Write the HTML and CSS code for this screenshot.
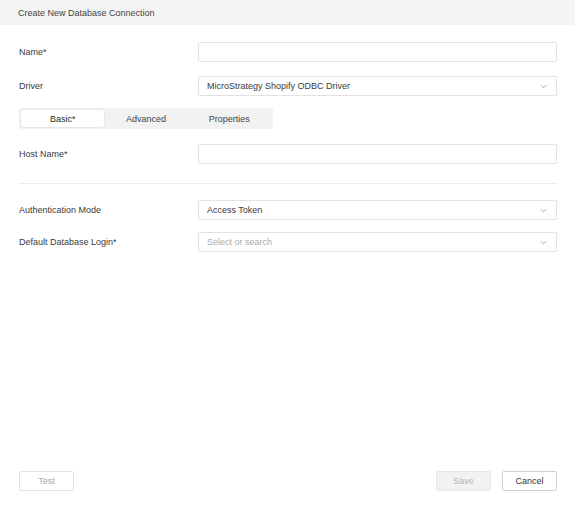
FILE: index.html
```html
<!DOCTYPE html>
<html>
<head>
<meta charset="utf-8">
<link rel="stylesheet" href="styles.css">
</head>
<body>
<div class="dialog">
  <div class="header">Create New Database Connection</div>
  <div class="body">
    <div class="row row-name">
      <div class="label">Name*</div>
      <div class="field"></div>
    </div>
    <div class="row row-driver">
      <div class="label">Driver</div>
      <div class="field select"><span class="value">MicroStrategy Shopify ODBC Driver</span><svg class="chev" viewBox="0 0 8 5" width="7" height="5"><path d="M1 1 L4 4 L7 1" fill="none" stroke="#999" stroke-width="1"/></svg></div>
    </div>
    <div class="tabs">
      <div class="tab active">Basic*</div>
      <div class="tab">Advanced</div>
      <div class="tab">Properties</div>
    </div>
    <div class="row row-host">
      <div class="label">Host Name*</div>
      <div class="field"></div>
    </div>
    <div class="divider"></div>
    <div class="row row-auth">
      <div class="label">Authentication Mode</div>
      <div class="field select"><span class="value">Access Token</span><svg class="chev" viewBox="0 0 8 5" width="7" height="5"><path d="M1 1 L4 4 L7 1" fill="none" stroke="#999" stroke-width="1"/></svg></div>
    </div>
    <div class="row row-login">
      <div class="label">Default Database Login*</div>
      <div class="field select"><span class="value placeholder">Select or search</span><svg class="chev" viewBox="0 0 8 5" width="7" height="5"><path d="M1 1 L4 4 L7 1" fill="none" stroke="#999" stroke-width="1"/></svg></div>
    </div>
  </div>
  <div class="footer">
    <button class="btn btn-test">Test</button>
    <div class="right">
      <button class="btn btn-save">Save</button>
      <button class="btn btn-cancel">Cancel</button>
    </div>
  </div>
</div>
</body>
</html>
```
FILE: styles.css
```css
* { box-sizing: border-box; }
html, body { margin: 0; padding: 0; background: #fff; }
body {
  font-family: "Liberation Sans", Arial, sans-serif;
  font-size: 9px;
  color: #3a3a3a;
}
.dialog {
  height: 506px;
  display: flex;
  flex-direction: column;
}
.header {
  height: 25px;
  background: #f4f4f4;
  color: #454545;
  padding-left: 18px;
  display: flex;
  align-items: center;
  font-size: 9px;
}
.body {
  padding: 17px 18px 0 19px;
  display: flex;
  flex-direction: column;
}
.row {
  display: flex;
  align-items: center;
  height: 20px;
}
.label {
  width: 179px;
  flex: none;
  color: #3a3a3a;
}
.field {
  flex: 1;
  height: 20px;
  border: 1px solid #e2e2e2;
  border-radius: 2px;
  box-shadow: 0 0 1px rgba(0,0,0,0.06);
  display: flex;
  align-items: center;
  padding: 0 8px 0 8px;
}
.select .value { flex: 1; color: #3a3a3a; }
.select .placeholder { color: #aaa; }
.chev { flex: none; margin-right: 1px; }
.row-driver { margin-top: 14px; }
.tabs {
  margin-top: 12px;
  width: 254px;
  height: 21px;
  background: #f2f2f2;
  border-radius: 2px;
  padding: 2px;
  display: flex;
}
.tab {
  flex: 1;
  display: flex;
  align-items: center;
  justify-content: center;
  color: #444;
  border-radius: 2px;
}
.tab.active {
  background: #fff;
  color: #2a2a2a;
  box-shadow: 0 0 2px rgba(0,0,0,0.15);
}
.row-host { margin-top: 15px; }
.divider {
  margin-top: 19px;
  height: 1px;
  background: #ececec;
}
.row-auth { margin-top: 16px; }
.row-login { margin-top: 12px; }
.footer {
  margin-top: auto;
  padding: 0 18px 15px 19px;
  display: flex;
  justify-content: space-between;
  align-items: center;
}
.right { display: flex; gap: 11px; }
.btn {
  width: 55px;
  height: 20px;
  font-family: "Liberation Sans", Arial, sans-serif;
  font-size: 9px;
  border-radius: 2px;
  padding: 0;
  background: #fff;
}
.btn-test { border: 1px solid #e2e2e2; color: #aaa; }
.btn-save { background: #f2f2f2; border: 1px solid #e6e6e6; color: #b5b5b5; }
.btn-cancel { border: 1px solid #cfcfcf; color: #333; }
```
